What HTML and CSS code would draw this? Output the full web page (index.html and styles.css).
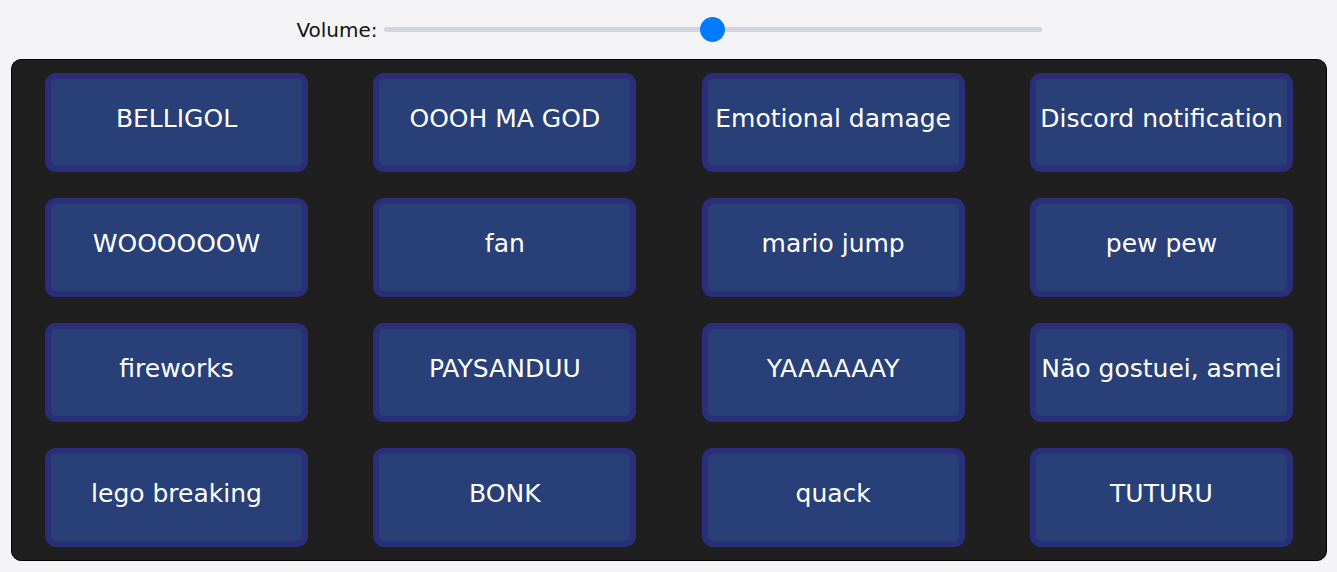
FILE: index.html
```html
<!DOCTYPE html>
<html lang="en">
<head>
<meta charset="utf-8">
<title>Soundboard</title>
<link rel="stylesheet" href="styles.css">
</head>
<body>
<div class="volume">
  <label class="volume-label" for="vol">Volume:</label>
  <input id="vol" class="volume-slider" type="range" min="0" max="100" value="50">
</div>
<main class="board">
  <button class="sound">BELLIGOL</button>
  <button class="sound">OOOH MA GOD</button>
  <button class="sound">Emotional damage</button>
  <button class="sound">Discord notification</button>
  <button class="sound">WOOOOOOW</button>
  <button class="sound">fan</button>
  <button class="sound">mario jump</button>
  <button class="sound">pew pew</button>
  <button class="sound">fireworks</button>
  <button class="sound">PAYSANDUU</button>
  <button class="sound">YAAAAAAY</button>
  <button class="sound">Não gostuei, asmei</button>
  <button class="sound">lego breaking</button>
  <button class="sound">BONK</button>
  <button class="sound">quack</button>
  <button class="sound">TUTURU</button>
</main>
</body>
</html>
```
FILE: styles.css
```css
html, body {
  margin: 0;
  padding: 0;
}
body {
  background: #f4f4f6;
  font-family: "DejaVu Sans", "Open Sans", sans-serif;
  padding: 0 10px 10px 11px;
}
.volume {
  display: flex;
  justify-content: center;
  align-items: center;
  height: 59px;
  gap: 6px;
}
.volume-label {
  font-size: 20px;
  color: #111;
}
.volume-slider {
  -webkit-appearance: none;
  appearance: none;
  width: 658px;
  height: 5px;
  background: #d1d5db;
  border-radius: 3px;
  margin: 0;
  outline: none;
}
.volume-slider::-webkit-slider-thumb {
  -webkit-appearance: none;
  appearance: none;
  width: 25px;
  height: 25px;
  border-radius: 50%;
  background: #007bff;
  border: none;
}
.board {
  background: #1f1f1f;
  border: 1px solid #000;
  border-radius: 10px;
  padding: 13px 33px;
  display: grid;
  grid-template-columns: repeat(4, 263px);
  justify-content: space-between;
  row-gap: 26px;
}
.sound {
  height: 99px;
  background: #284077;
  border: 6px solid #2b2f7a;
  border-radius: 11px;
  color: #fff;
  font-family: inherit;
  font-size: 25px;
  white-space: nowrap;
  padding: 0 0 9px;
  overflow: visible;
}
```
